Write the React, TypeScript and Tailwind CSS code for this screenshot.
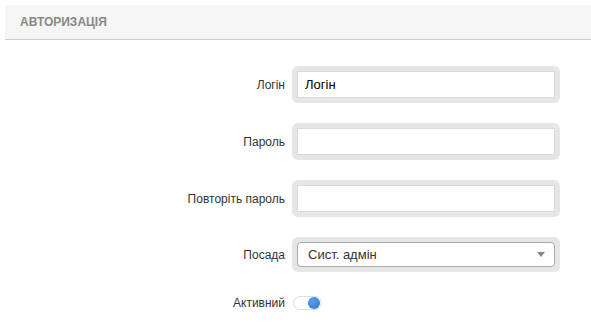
import React from "react";

function Row({ label, children, h = 37 }: { label: string; children: React.ReactNode; h?: number }) {
  return (
    <div className="flex items-center" style={{ height: h }}>
      <div className="w-[285px] pr-[0px] text-right text-[12px] text-[#333]">{label}</div>
      <div className="ml-[7px]">{children}</div>
    </div>
  );
}

function TextBox({ value }: { value?: string }) {
  return (
    <div className="w-[268px] rounded-[6px] bg-[#e6e6e6] p-[5px]">
      <div className="flex h-[27px] items-center border border-[#dadada] bg-white px-[7px] text-[13px] text-black">
        {value}
      </div>
    </div>
  );
}

export default function App() {
  return (
    <div className="h-[325px] w-[591px] bg-white" style={{ fontFamily: '"Liberation Sans", Arial, sans-serif' }}>
      <div className="pl-[5px] pt-[5px]">
        <div className="flex h-[35px] items-center border-b border-[#cccccc] bg-[#f5f5f5] pl-[15px] text-[12px] font-bold text-[#888888]">
          АВТОРИЗАЦІЯ
        </div>
      </div>
      <div className="flex flex-col pt-[26px]">
        <Row label="Логін">
          <TextBox value="Логін" />
        </Row>
        <div className="h-[20px]" />
        <Row label="Пароль">
          <TextBox />
        </Row>
        <div className="h-[20px]" />
        <Row label="Повторіть пароль">
          <TextBox />
        </Row>
        <div className="h-[20px]" />
        <Row label="Посада" h={35}>
          <div className="w-[268px] rounded-[6px] bg-[#e6e6e6] p-[5px]">
            <div className="flex h-[25px] items-center justify-between rounded-[4px] border border-[#aaaaaa] bg-white pl-[10px] pr-[9px] text-[13px] text-[#333]">
              <span>Сист. адмін</span>
              <svg width="8" height="5" viewBox="0 0 8 5">
                <path d="M0 0 L8 0 L4 5 Z" fill="#888" />
              </svg>
            </div>
          </div>
        </Row>
        <div className="h-[23px]" />
        <div className="flex h-[16px] items-center">
          <div className="w-[285px] text-right text-[12px] text-[#333]">Активний</div>
          <div className="ml-[8px] flex h-[14px] w-[29px] items-center justify-end rounded-full border border-[#dddddd] bg-white pr-[1px]">
            <div
              className="h-[12px] w-[12px] rounded-full"
              style={{ background: "radial-gradient(circle at 40% 35%, #5aa0ea, #2a74c9)" }}
            />
          </div>
        </div>
      </div>
    </div>
  );
}
